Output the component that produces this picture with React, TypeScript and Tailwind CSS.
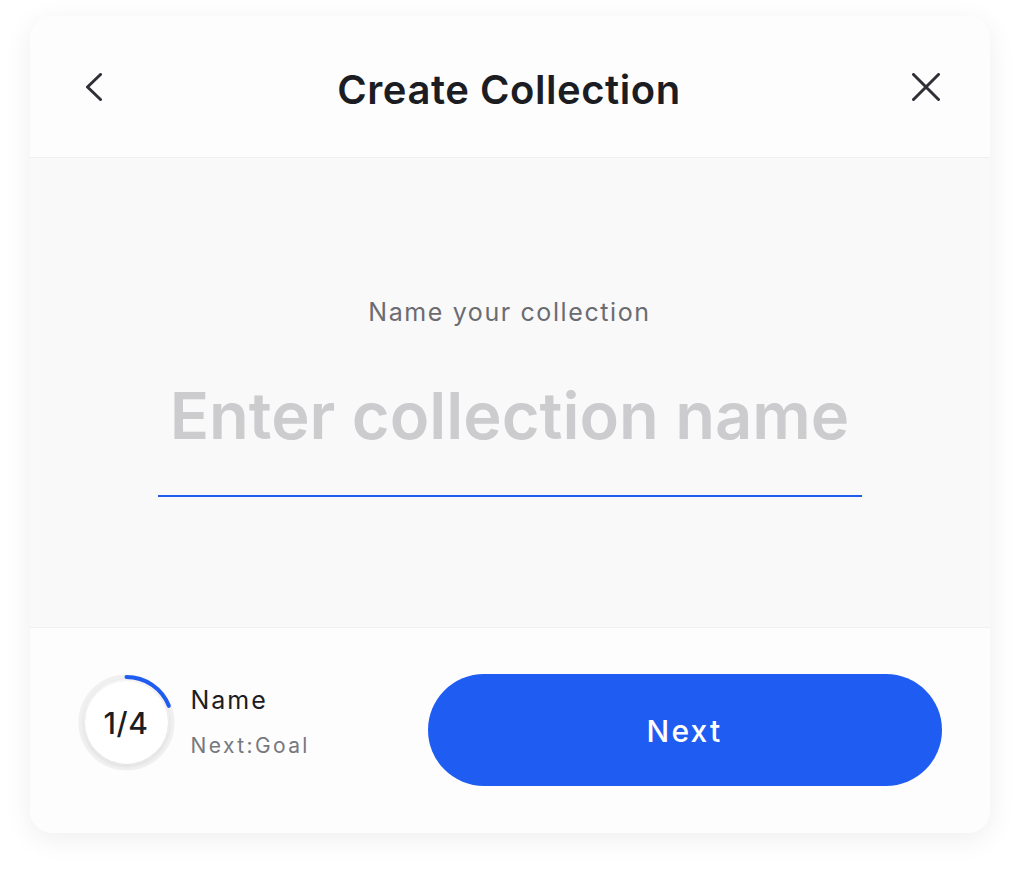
import React from "react";

export default function App() {
  const r = 45.5;
  const c = 2 * Math.PI * r;
  return (
    <div className="min-h-[876px] w-full bg-white pt-4" style={{ fontFamily: "Inter, 'Noto Sans', sans-serif" }}>
      <div className="mx-auto w-[960px] overflow-hidden rounded-[22px] bg-[#fdfdfd] shadow-[0_6px_28px_rgba(0,0,0,0.07)]">
        {/* Header */}
        <div className="grid h-[142px] grid-cols-[1fr_auto_1fr] items-center border-b border-[#f0f0f0] pl-[56px] pr-[50px]">
          <button className="flex h-[28px] w-[16px] items-center justify-self-start">
            <svg width="16" height="28" viewBox="0 0 16 28" fill="none">
              <path d="M14.5 1.5L1.5 14L14.5 26.5" stroke="#2e3036" strokeWidth="3" strokeLinecap="round" strokeLinejoin="round" />
            </svg>
          </button>
          <h1 className="mr-[7px] pt-[7px] text-[40px] font-semibold leading-[48px] tracking-[0.55px] text-[#1c1d22]">Create Collection</h1>
          <button className="flex h-[28px] w-[28px] items-center justify-self-end">
            <svg width="28" height="28" viewBox="0 0 28 28" fill="none">
              <path d="M1.5 1.5L26.5 26.5M26.5 1.5L1.5 26.5" stroke="#2e3036" strokeWidth="3" strokeLinecap="round" />
            </svg>
          </button>
        </div>

        {/* Body */}
        <div className="flex h-[469px] flex-col items-center bg-[#f9f9f9] pt-[136px]">
          <p className="text-[25px] leading-[36px] tracking-[1.6px] text-[#6b6c72]">Name your collection</p>
          <div className="mt-[46px] flex w-[704px] flex-col items-center">
            <input
              placeholder="Enter collection name"
              className="w-full bg-transparent text-center text-[65px] font-semibold leading-[80px] tracking-[0px] text-[#1c1d22] outline-none placeholder:text-[#cccccf]"
            />
            <div className="mt-[39px] h-[2px] w-full bg-[#1f5cf2]" />
          </div>
        </div>

        {/* Footer */}
        <div className="flex h-[206px] items-start justify-between border-t border-[#f0f0f0] bg-[#fdfdfd] px-[48px] pt-[46px]">
          <div className="flex items-start gap-[16px]">
            <div className="relative h-[97px] w-[97px]">
              <svg width="97" height="97" viewBox="0 0 97 97" className="absolute inset-0">
                <circle cx="48.5" cy="48.5" r={r} fill="none" stroke="#f0f0f0" strokeWidth="5" />
                <circle
                  cx="48.5"
                  cy="48.5"
                  r={r}
                  fill="none"
                  stroke="#1f5cf2"
                  strokeWidth="4"
                  strokeLinecap="round"
                  strokeDasharray={`${c * 0.19} ${c}`}
                  transform="rotate(-90 48.5 48.5)"
                />
              </svg>
              <div className="absolute left-[7px] top-[7px] flex h-[83px] w-[83px] items-center justify-center rounded-full bg-white shadow-[0_1px_4px_rgba(0,0,0,0.18)]">
                <span className="pt-[1px] text-[30px] font-medium tracking-[0.6px] text-[#1c1d22]">1/4</span>
              </div>
            </div>
            <div className="flex flex-col pt-[10px]">
              <span className="text-[25px] leading-[32px] tracking-[2px] text-[#1c1d22]">Name</span>
              <span className="mt-[16px] text-[21px] leading-[28px] tracking-[2.4px] text-[#77787e]">Next:Goal</span>
            </div>
          </div>
          <button className="flex h-[112px] w-[514px] items-center justify-center rounded-full bg-[#1f5cf2] pt-[3px] text-[30px] font-medium tracking-[2.2px] text-white">
            Next
          </button>
        </div>
      </div>
    </div>
  );
}
